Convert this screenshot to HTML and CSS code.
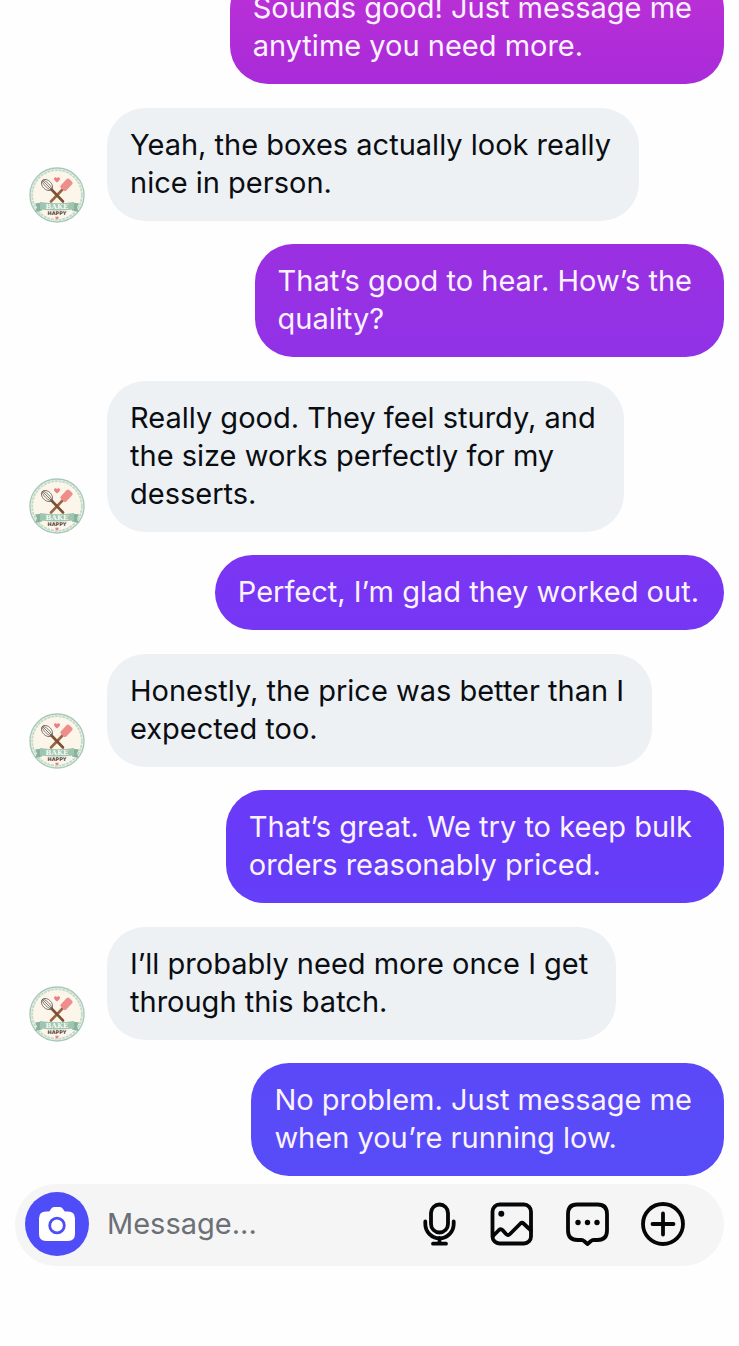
FILE: index.html
```html
<!DOCTYPE html>
<html lang="en">
<head>
<meta charset="utf-8">
<meta name="viewport" content="width=device-width, initial-scale=1">
<title>Messages</title>
<link rel="stylesheet" href="styles.css">
</head>
<body>
<main class="chat">
  <div class="row sent"><p class="bubble">Sounds good! Just message me<br>anytime you need more.</p></div>
  <div class="row received">
    <svg class="avatar" viewBox="0 0 56 56" role="img" aria-label="Bake Happy">
      <g id="bake-happy">
        <circle cx="28" cy="28" r="27" fill="#fbf8ec" stroke="#a9c9b8" stroke-width="1.400"/>
        <circle cx="28" cy="28" r="24.800" fill="none" stroke="#c3dacd" stroke-width="2" stroke-dasharray="3 .8"/>
        <circle cx="28" cy="28" r="23.600" fill="#fbf6e9"/>
        <path d="M28 15.500c-1.700-1.500-3-2.400-3-3.700 0-1.900 2.300-2.200 3-.6.700-1.600 3-1.300 3 .6 0 1.300-1.300 2.200-3 3.700z" fill="#ec7f84"/>
        <path d="M33.500 22.500L22 34.500" stroke="#9a6544" stroke-width="2.600" stroke-linecap="round"/>
        <path d="M22.500 22.500L34 34.500" stroke="#7d4f35" stroke-width="2.600" stroke-linecap="round"/>
        <g transform="rotate(45 18 18)" fill="none" stroke="#6f6261" stroke-width=".8">
          <ellipse cx="18" cy="18" rx="6.500" ry="4.500"/>
          <ellipse cx="18" cy="18" rx="6.500" ry="2"/>
          <path d="M11.500 18h13"/>
        </g>
        <rect x="31.500" y="14" width="12" height="7.500" rx="1.800" transform="rotate(-46 37.500 17.750)" fill="#ef8d8b"/>
        <path d="M6 36.500l7-1v8l-7 1.500 2-4.500zM50 36.500l-7-1v8l7 1.500-2-4.500z" fill="#86b39d"/>
        <path d="M11 35q17 2.500 34 0v7.500q-17 2-34 0z" fill="#9fc5b0"/>
        <text x="28" y="41.500" text-anchor="middle" class="logo-bake">BAKE</text>
        <text x="28" y="47.500" text-anchor="middle" class="logo-happy">HAPPY</text>
        <path d="M28 52.500c-1-.9-1.700-1.400-1.700-2.100 0-1.100 1.300-1.200 1.700-.3.400-.9 1.700-.8 1.700.3 0 .7-.7 1.200-1.700 2.100z" fill="#ec7f84"/>
      </g>
    </svg>
    <p class="bubble">Yeah, the boxes actually look really<br>nice in person.</p>
  </div>
  <div class="row sent"><p class="bubble">That’s good to hear. How’s the<br>quality?</p></div>
  <div class="row received">
    <svg class="avatar" viewBox="0 0 56 56" role="img" aria-label="Bake Happy"><use href="#bake-happy"/></svg>
    <p class="bubble">Really good. They feel sturdy, and<br>the size works perfectly for my<br>desserts.</p>
  </div>
  <div class="row sent"><p class="bubble single">Perfect, I’m glad they worked out.</p></div>
  <div class="row received">
    <svg class="avatar" viewBox="0 0 56 56" role="img" aria-label="Bake Happy"><use href="#bake-happy"/></svg>
    <p class="bubble">Honestly, the price was better than I<br>expected too.</p>
  </div>
  <div class="row sent"><p class="bubble">That’s great. We try to keep bulk<br>orders reasonably priced.</p></div>
  <div class="row received">
    <svg class="avatar" viewBox="0 0 56 56" role="img" aria-label="Bake Happy"><use href="#bake-happy"/></svg>
    <p class="bubble">I’ll probably need more once I get<br>through this batch.</p>
  </div>
  <div class="row sent"><p class="bubble">No problem. Just message me<br>when you’re running low.</p></div>
</main>

<form class="composer">
  <button type="button" class="camera" aria-label="Camera">
    <svg width="36" height="34" viewBox="0 0 36 34" aria-hidden="true">
      <path fill="#fff" d="M7 4.500h2.500Q10.500 4.500 11.300 3 12.800 0 15 0h6q2.200 0 3.700 3 .8 1.500 1.800 1.500H29q7 0 7 7V27q0 7-7 7H7q-7 0-7-7V11.500q0-7 7-7z"/>
      <circle cx="18" cy="18.500" r="7.300" fill="#fff" stroke="#4f4df8" stroke-width="2.800"/>
    </svg>
  </button>
  <input class="message" type="text" placeholder="Message..." aria-label="Message">
  <div class="tools">
    <button type="button" class="tool" aria-label="Voice message">
      <svg width="34" height="44" viewBox="0 0 34 44" aria-hidden="true">
        <rect x="8" y="2.500" width="17" height="28" rx="8.500"/>
        <path d="M2.300 19.500v2.500a14.200 14.200 0 0 0 28.400 0v-2.500M16.500 36v5.500M10 41.700h13"/>
      </svg>
    </button>
    <button type="button" class="tool" aria-label="Photo">
      <svg width="44" height="44" viewBox="0 0 44 44" aria-hidden="true">
        <rect x="3.500" y="2.500" width="38.500" height="39" rx="7"/>
        <path d="M4 34l6-6q1.800-1.700 3.500 0l3.500 4q2 2 4 0L31.500 21.500q1.500-1.400 3 0L42 28.500"/>
        <circle class="dot" cx="12.300" cy="11.800" r="3"/>
      </svg>
    </button>
    <button type="button" class="tool" aria-label="Quick replies">
      <svg width="44" height="44" viewBox="0 0 44 44" aria-hidden="true">
        <path d="M12 2.500h20.500q9.500 0 9.500 9.500v16.500q0 9.500-9.500 9.500h-4q-1.500 0-2.500 1L22.500 42 19 39q-1-1-2.500-1H12.500q-9.500 0-9.500-9.500V12q0-9.500 9-9.500z"/>
        <circle class="dot" cx="13" cy="20.500" r="2.700"/><circle class="dot" cx="22.500" cy="20.500" r="2.700"/><circle class="dot" cx="32" cy="20.500" r="2.700"/>
      </svg>
    </button>
    <button type="button" class="tool" aria-label="More">
      <svg width="44" height="44" viewBox="0 0 44 44" aria-hidden="true">
        <circle cx="22" cy="22" r="20"/><path d="M22 11.500v21M11.500 22h21"/>
      </svg>
    </button>
  </div>
</form>
</body>
</html>
```
FILE: styles.css
```css
* { box-sizing: border-box; }

body {
  display: flex;
  flex-direction: column;
  height: 100vh;
  margin: 0;
  padding-bottom: 80px;
  background: #fefefe;
  color: #0a0d12;
  font-family: Inter, "Liberation Sans", sans-serif;
  font-size: 29px;
  line-height: 38px;
}

.chat {
  display: flex;
  flex: 1;
  flex-direction: column;
  justify-content: flex-end;
  min-height: 0;
  padding: 0 15px 8px 29px;
  overflow: hidden;
}

.row {
  display: flex;
  flex-shrink: 0;
  align-items: flex-end;
  gap: 22px;
}

.sent {
  justify-content: flex-end;
  margin-top: 23px;
}

.received { margin-top: 24px; }

.bubble {
  margin: 0;
  padding: 18px 32px 19px 23px;
  border-radius: 38px;
  background: #edf1f4;
}

.received .bubble { padding-right: 28px; }

.sent .bubble {
  background: linear-gradient(#b82fd6 0, #a92bd9 80px, #9631e4 300px, #7836f4 592px, #673bf8 847px, #594bf8 1120px, #4f4df8 1346px) fixed;
  color: #faf3ff;
}

.sent .single { padding-right: 25px; }

.avatar {
  flex: none;
  width: 56px;
  height: 56px;
  margin-bottom: -2px;
}

.logo-bake {
  fill: #f4faf4;
  font: 700 7px "DejaVu Serif", serif;
}

.logo-happy {
  fill: #59423d;
  font: 700 5px "DejaVu Sans", sans-serif;
}

.composer {
  display: flex;
  align-items: center;
  height: 82px;
  margin: 0 15px;
  padding: 0 39px 2px 10px;
  border-radius: 41px;
  background: #f5f5f5;
}

button {
  display: flex;
  align-items: center;
  justify-content: center;
  padding: 0;
  border: 0;
  background: none;
}

.camera {
  flex: none;
  width: 64px;
  height: 64px;
  border-radius: 50%;
  background: #4f4df8;
}

.message {
  flex: 1;
  min-width: 0;
  padding: 0 18px;
  border: 0;
  outline: 0;
  background: none;
  color: inherit;
  font: inherit;
}

.message::placeholder {
  color: #6b6f76;
  opacity: 1;
}

.tools {
  display: flex;
  gap: 32px;
}

.tool svg {
  fill: none;
  stroke: #050608;
  stroke-width: 3.8;
  stroke-linecap: round;
  stroke-linejoin: round;
}

.tool .dot {
  fill: #050608;
  stroke: none;
}
```
